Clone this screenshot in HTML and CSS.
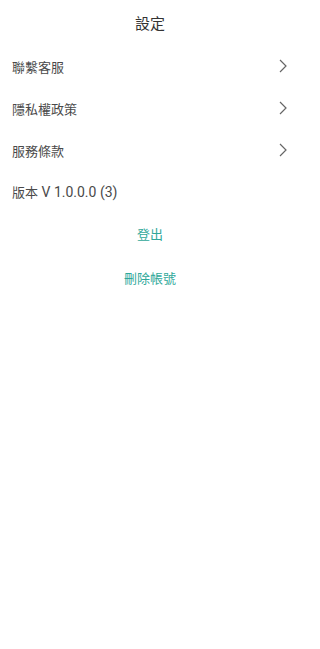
FILE: index.html
```html
<!DOCTYPE html>
<html lang="zh-Hant">
<head>
<meta charset="utf-8">
<title>設定</title>
<link rel="stylesheet" href="styles.css">
</head>
<body>
<div class="page">
  <header class="header">設定</header>
  <ul class="menu">
    <li class="row">
      <span class="label">聯繫客服</span>
      <svg class="chev" viewBox="0 0 8 14" width="8" height="14"><path d="M1 1 L7 7 L1 13" fill="none" stroke="#666" stroke-width="1.2"/></svg>
    </li>
    <li class="row">
      <span class="label">隱私權政策</span>
      <svg class="chev" viewBox="0 0 8 14" width="8" height="14"><path d="M1 1 L7 7 L1 13" fill="none" stroke="#666" stroke-width="1.2"/></svg>
    </li>
    <li class="row">
      <span class="label">服務條款</span>
      <svg class="chev" viewBox="0 0 8 14" width="8" height="14"><path d="M1 1 L7 7 L1 13" fill="none" stroke="#666" stroke-width="1.2"/></svg>
    </li>
    <li class="row version">
      <span class="label"><span class="cjk">版本</span> V 1.0.0.0 (3)</span>
    </li>
  </ul>
  <div class="actions">
    <button class="action">登出</button>
    <button class="action">刪除帳號</button>
  </div>
</div>
</body>
</html>
```

FILE: styles.css
```css
html, body {
  margin: 0;
  padding: 0;
  background: #ffffff;
}
.page {
  width: 300px;
  font-family: Roboto, "Noto Sans CJK TC", "Noto Sans", sans-serif;
  color: #444;
}
.header {
  height: 45px;
  display: flex;
  align-items: center;
  justify-content: center;
  font-size: 15px;
  color: #333;
}
.menu {
  list-style: none;
  margin: 0;
  padding: 0;
}
.row {
  height: 42px;
  display: flex;
  align-items: center;
  justify-content: space-between;
  padding: 0 12px 0 12px;
  font-size: 13px;
  color: #4a4a4a;
}
.row.version {
  height: 40px;
  font-size: 14px;
}
.cjk {
  font-size: 13px;
}
.chev {
  display: block;
  margin-right: 1px;
}
.actions {
  display: flex;
  flex-direction: column;
}
.action {
  height: 44px;
  border: 0;
  background: none;
  padding: 0;
  font-family: inherit;
  font-size: 13px;
  color: #2fa89a;
}
```
